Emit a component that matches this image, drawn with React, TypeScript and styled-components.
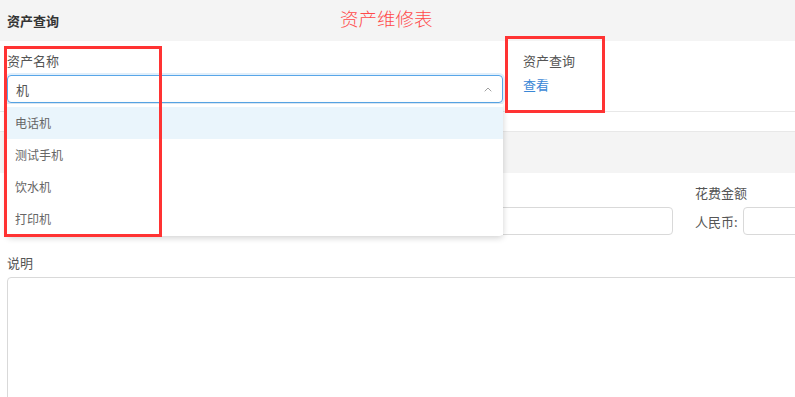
import React from "react";
import styled, { createGlobalStyle } from "styled-components";

const Global = createGlobalStyle`
  html, body { margin: 0; padding: 0; background: #fff; overflow: hidden; }
  body { font-family: "Noto Sans CJK SC", "Noto Sans", sans-serif; }
  * { box-sizing: border-box; }
`;

const Page = styled.div`
  position: relative;
  width: 795px;
  height: 397px;
  overflow: hidden;
  color: #555;
  font-size: 13px;
`;

const Header = styled.div`
  height: 41px;
  background: #f4f4f4;
  display: flex;
  align-items: center;
  padding-left: 7px;
  font-size: 13px;
  font-weight: bold;
  color: #333;
`;

const TopSection = styled.div`
  display: flex;
  gap: 20px;
  padding: 11px 0 8px 7px;
  border-bottom: 1px solid #e8e8e8;
`;

const Field = styled.div<{ $w?: number }>`
  position: relative;
  width: ${(p) => (p.$w ? `${p.$w}px` : "auto")};
  flex: none;
  display: flex;
  flex-direction: column;
`;

const Label = styled.div`
  height: 18px;
  line-height: 18px;
  font-size: 13px;
  color: #555;
  margin-bottom: 5px;
  white-space: nowrap;
`;

const SelectBox = styled.div`
  height: 28px;
  border: 1px solid #58a6e8;
  border-radius: 4px;
  box-shadow: 0 0 0 2px rgba(88, 166, 232, 0.18);
  display: flex;
  align-items: center;
  justify-content: space-between;
  padding: 0 10px 0 8px;
  font-size: 13px;
  color: #555;
`;

const Dropdown = styled.ul`
  position: absolute;
  left: 0;
  top: 52px;
  width: 496px;
  margin: 0;
  padding: 3px 0 0;
  list-style: none;
  background: #fff;
  border-radius: 0 0 4px 4px;
  box-shadow: 0 2px 6px rgba(0, 0, 0, 0.18);
  z-index: 5;
  height: 132px;
`;

const Option = styled.li<{ $active?: boolean }>`
  height: 32px;
  line-height: 32px;
  padding-left: 8px;
  font-size: 12px;
  color: #666;
  background: ${(p) => (p.$active ? "#eaf5fc" : "#fff")};
`;

const InfoCol = styled.div`
  display: flex;
  flex-direction: column;
`;

const InfoLine = styled.div<{ $link?: boolean }>`
  height: 24px;
  line-height: 18px;
  font-size: 13px;
  color: ${(p) => (p.$link ? "#3a87d6" : "#555")};
  cursor: ${(p) => (p.$link ? "pointer" : "default")};
`;

const Spacer = styled.div`
  height: 19px;
`;

const SectionBar = styled.div`
  height: 42px;
  background: #f4f4f4;
  border-top: 1px solid #e8e8e8;
`;

const FormRow = styled.div`
  display: flex;
  padding: 11px 0 0 7px;
`;

const TextInput = styled.div<{ $w: number }>`
  width: ${(p) => p.$w}px;
  height: 28px;
  border: 1px solid #d9d9d9;
  border-radius: 4px;
  background: #fff;
  flex: none;
`;

const Inline = styled.div`
  display: flex;
  align-items: center;
  gap: 5px;
  font-size: 13px;
  color: #555;
`;

const NoteBlock = styled.div`
  padding: 19px 0 0 7px;
`;

const TextArea = styled.div`
  width: 980px;
  height: 140px;
  border: 1px solid #d9d9d9;
  border-radius: 4px;
`;

const RedBox = styled.div<{ $x: number; $y: number; $w: number; $h: number }>`
  position: absolute;
  left: ${(p) => p.$x}px;
  top: ${(p) => p.$y}px;
  width: ${(p) => p.$w}px;
  height: ${(p) => p.$h}px;
  border: 3px solid #ff3333;
  z-index: 10;
  pointer-events: none;
`;

const RedTitle = styled.div`
  position: absolute;
  left: 340px;
  top: 5px;
  font-size: 18.5px;
  line-height: 26px;
  color: #ff4a4a;
  z-index: 10;
  font-weight: 300;
`;

const Chevron = () => (
  <svg width="8" height="5" viewBox="0 0 8 5" fill="none">
    <path d="M0.7 4.3 L4 1 L7.3 4.3" stroke="#a0a0a0" strokeWidth="1" />
  </svg>
);

export default function App() {
  const options = ["电话机", "测试手机", "饮水机", "打印机"];
  return (
    <>
      <Global />
      <Page>
        <Header>资产查询</Header>
        <TopSection>
          <Field $w={496}>
            <Label>资产名称</Label>
            <SelectBox>
              <span>机</span>
              <Chevron />
            </SelectBox>
            <Dropdown>
              {options.map((o, i) => (
                <Option key={o} $active={i === 0}>
                  {o}
                </Option>
              ))}
            </Dropdown>
          </Field>
          <InfoCol>
            <InfoLine>资产查询</InfoLine>
            <InfoLine $link>查看</InfoLine>
          </InfoCol>
        </TopSection>
        <Spacer />
        <SectionBar />
        <FormRow>
          <Field $w={346} />
          <Field $w={342}>
            <Label>维修费用</Label>
            <TextInput $w={320} />
          </Field>
          <Field>
            <Label>花费金额</Label>
            <Inline>
              <span>人民币:</span>
              <TextInput $w={200} />
            </Inline>
          </Field>
        </FormRow>
        <NoteBlock>
          <Label>说明</Label>
          <TextArea />
        </NoteBlock>
        <RedTitle>资产维修表</RedTitle>
        <RedBox $x={4} $y={46} $w={158} $h={191} />
        <RedBox $x={505} $y={36} $w={100} $h={77} />
      </Page>
    </>
  );
}
